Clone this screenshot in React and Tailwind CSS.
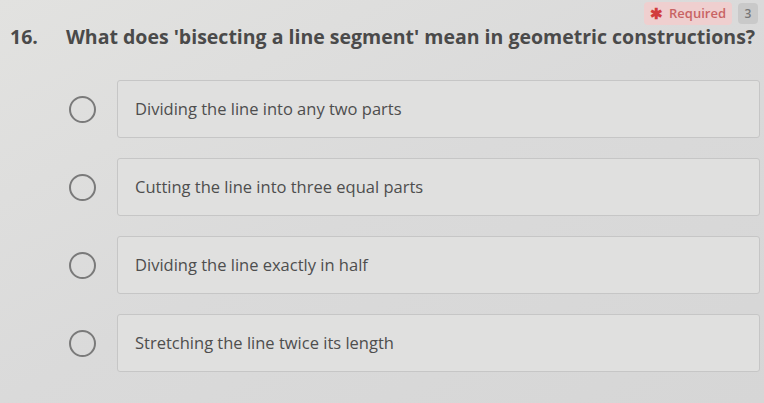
import React from 'react';

const options = [
  'Dividing the line into any two parts',
  'Cutting the line into three equal parts',
  'Dividing the line exactly in half',
  'Stretching the line twice its length',
];

const Radio = () => (
  <div className="w-[27px] h-[27px] rounded-full border-[2.5px] border-[#7a7a7a] shrink-0" />
);

export default function App() {
  return (
    <div
      className="w-[764px] h-[403px] overflow-hidden bg-gradient-to-br from-[#e2e2e0] via-[#dadada] to-[#d6d6d6] text-[#4a4a4a]"
      style={{ fontFamily: '"Open Sans", "Noto Sans", sans-serif' }}
    >
      <div className="flex justify-end items-start gap-[6px] pt-[2px] pr-[6px]">
        <div className="flex items-center gap-[6px] h-[23px] px-[6px] rounded-[4px] bg-[#efcfcf]">
          <span className="text-[#d23c3c] text-[15px] font-bold leading-none">✱</span>
          <span className="text-[#c86464] text-[13px] font-semibold leading-none">Required</span>
        </div>
        <div className="flex items-center justify-center w-[20px] h-[21px] mt-[1px] rounded-[4px] bg-[#c9c9c9] text-[#777] text-[12px] font-semibold">
          3
        </div>
      </div>

      <div className="flex items-baseline pl-[10px] mt-[-2px] text-[19.5px] font-bold leading-[28px] whitespace-nowrap">
        <span className="w-[56px]">16.</span>
        <span>What does 'bisecting a line segment' mean in geometric constructions?</span>
      </div>

      <div className="flex flex-col gap-[20px] mt-[29px] pl-[69px] pr-[4px]">
        {options.map((opt) => (
          <div key={opt} className="flex items-center gap-[21px]">
            <Radio />
            <div className="flex-1 h-[58px] flex items-center pl-[17px] rounded-[3px] border border-[#c6c6c6] bg-[#e0e0df] text-[16.5px] text-[#4e4e4e]">
              {opt}
            </div>
          </div>
        ))}
      </div>
    </div>
  );
}
